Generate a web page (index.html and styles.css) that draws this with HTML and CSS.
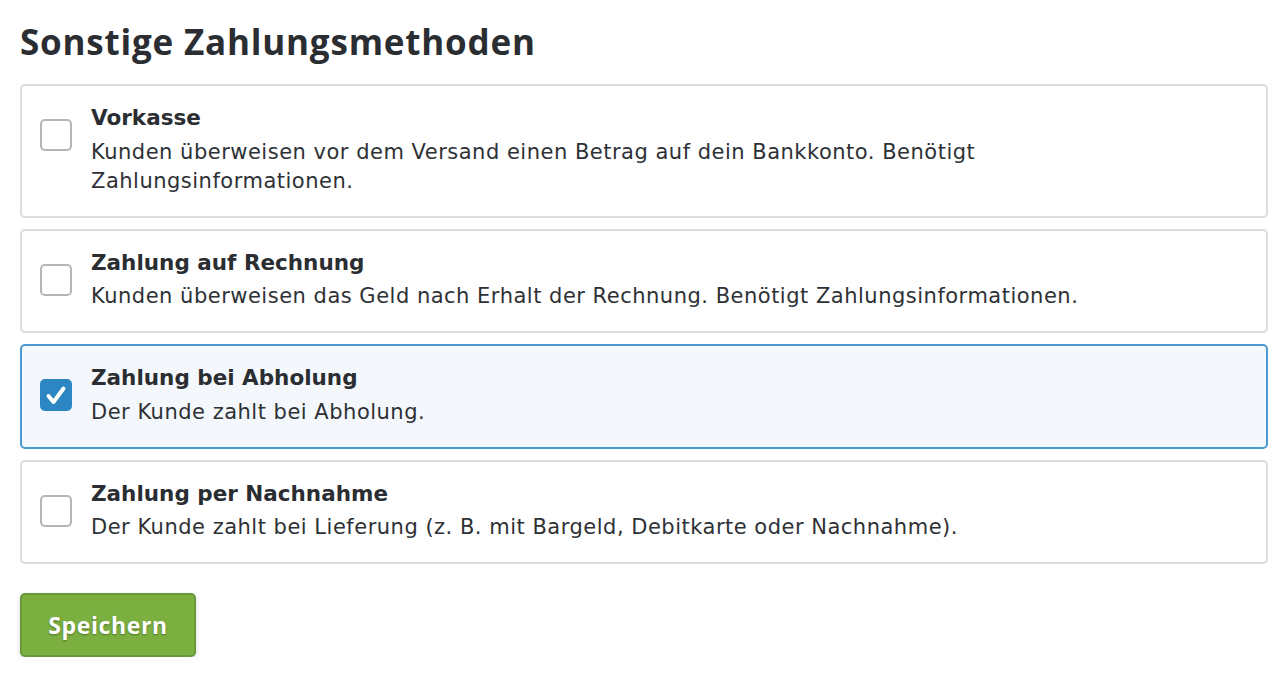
FILE: index.html
```html
<!DOCTYPE html>
<html lang="de">
<head>
<meta charset="utf-8">
<title>Sonstige Zahlungsmethoden</title>
<link rel="stylesheet" href="styles.css">
</head>
<body>
<div class="page">
  <h1 class="heading">Sonstige Zahlungsmethoden</h1>
  <div class="options">
    <label class="option">
      <span class="box"></span>
      <span class="text">
        <span class="title">Vorkasse</span>
        <span class="desc">Kunden überweisen vor dem Versand einen Betrag auf dein Bankkonto. Benötigt Zahlungsinformationen.</span>
      </span>
    </label>
    <label class="option">
      <span class="box"></span>
      <span class="text">
        <span class="title">Zahlung auf Rechnung</span>
        <span class="desc">Kunden überweisen das Geld nach Erhalt der Rechnung. Benötigt Zahlungsinformationen.</span>
      </span>
    </label>
    <label class="option option-checked">
      <span class="box box-checked">
        <svg viewBox="0 0 32 32" width="32" height="32"><path d="M8.5 17 L13.5 23 L23.5 9.5" fill="none" stroke="#fff" stroke-width="4" stroke-linecap="round" stroke-linejoin="round"/></svg>
      </span>
      <span class="text">
        <span class="title">Zahlung bei Abholung</span>
        <span class="desc">Der Kunde zahlt bei Abholung.</span>
      </span>
    </label>
    <label class="option">
      <span class="box"></span>
      <span class="text">
        <span class="title">Zahlung per Nachnahme</span>
        <span class="desc">Der Kunde zahlt bei Lieferung (z. B. mit Bargeld, Debitkarte oder Nachnahme).</span>
      </span>
    </label>
  </div>
  <button class="save" type="button">Speichern</button>
</div>
</body>
</html>
```
FILE: styles.css
```css
* { box-sizing: border-box; }
html, body { margin: 0; padding: 0; background: #fff; }
body {
  font-family: "Open Sans", "Liberation Sans", sans-serif;
  color: #2e3135;
}
.page {
  padding: 20px 20px 0 20px;
  width: 1288px;
}
.heading {
  margin: 0 0 20px 0;
  font-size: 35px;
  line-height: 44px;
  font-weight: 700;
  letter-spacing: 0.8px;
  color: #2a2d31;
}
.options {
  display: flex;
  flex-direction: column;
  gap: 11px;
}
.option {
  display: flex;
  align-items: flex-start;
  gap: 19px;
  border: 2px solid #dcdcdc;
  border-radius: 5px;
  padding: 18px 18px 20px 18px;
  background: #fff;
}
.option-checked {
  background: #f4f8fc;
  border-color: #4a9ad2;
}
.box {
  flex: 0 0 32px;
  width: 32px;
  height: 32px;
  margin-top: 15px;
  border: 2px solid #b3b5b8;
  border-radius: 5px;
  background: #fff;
  display: flex;
  align-items: center;
  justify-content: center;
}
.box-checked {
  background: #2b86c3;
  border-color: #2b86c3;
}
.box-checked svg { display: block; flex: none; margin: -2px; }
.text {
  display: flex;
  flex-direction: column;
  gap: 5.5px;
}
.title {
  font-family: "DejaVu Sans", "Open Sans", sans-serif;
  font-size: 21.5px;
  line-height: 28px;
  font-weight: 700;
  color: #2a2d31;
}
.desc {
  font-family: "DejaVu Sans", "Open Sans", sans-serif;
  font-size: 21px;
  line-height: 29px;
  letter-spacing: 0.5px;
  color: #2e3135;
  max-width: 1000px;
}
.save {
  margin-top: 29px;
  width: 176px;
  height: 64px;
  background: #7bb040;
  border: 2px solid #67993a;
  border-radius: 5px;
  color: #fff;
  font-family: "Open Sans", "Liberation Sans", sans-serif;
  font-size: 23px;
  font-weight: 700;
  letter-spacing: 0.6px;
  text-shadow: 0 1px 2px rgba(0,0,0,0.35);
  box-shadow: 0 2px 4px rgba(0,0,0,0.18);
  cursor: pointer;
}
```
